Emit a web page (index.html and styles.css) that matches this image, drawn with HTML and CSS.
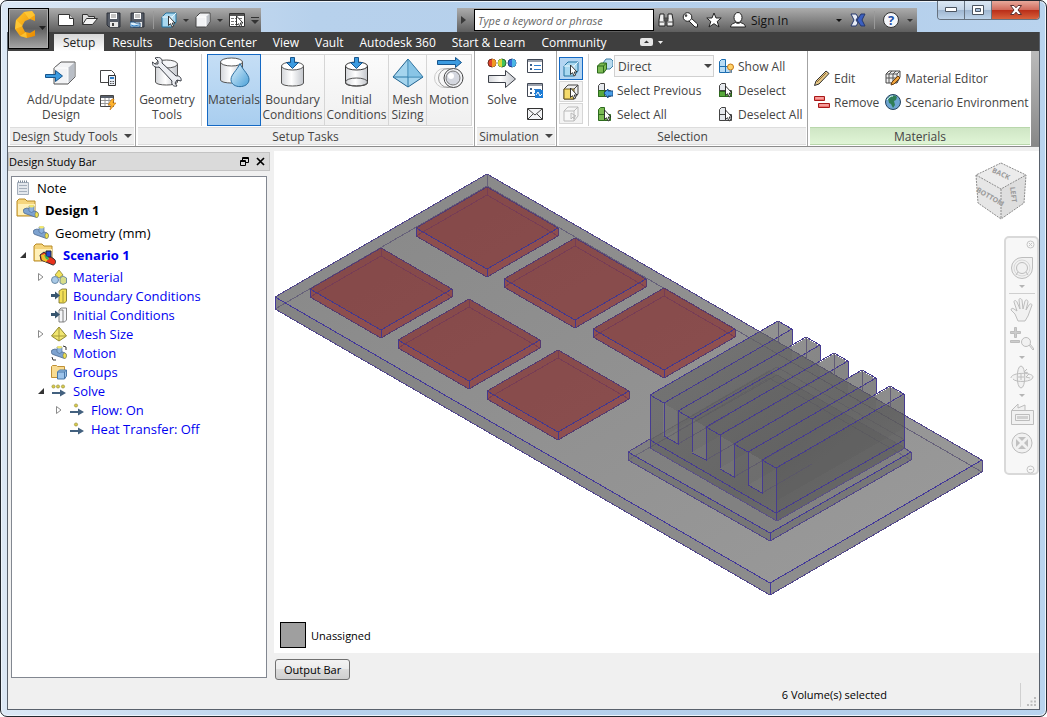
FILE: index.html
```html
<!DOCTYPE html>
<html lang="en">
<head>
  <meta charset="UTF-8" />
  <meta name="viewport" content="width=device-width, initial-scale=1" />
  <title>Design Study</title>
  <link rel="stylesheet" href="styles.css">
</head>
<body>

  <!-- Shared icons -->
  <svg class="sprite" width="0" height="0" aria-hidden="true">
    <defs>
      <linearGradient id="metal"><stop offset="0" stop-color="#d4d6da"/><stop offset=".45" stop-color="#fff"/><stop offset="1" stop-color="#c3c6cc"/></linearGradient>
      <linearGradient id="blue" x2="1" y2="1"><stop offset="0" stop-color="#e4f4fd"/><stop offset="1" stop-color="#4aa0d8"/></linearGradient>
      <linearGradient id="board" x2="1" y2="1"><stop offset="0" stop-color="#878787"/><stop offset="1" stop-color="#9b9b9b"/></linearGradient>
      <linearGradient id="fins" x2="1" y2="1"><stop offset="0" stop-color="#6a6a6a"/><stop offset=".6" stop-color="#5a5a5a"/><stop offset="1" stop-color="#6a6a6a"/></linearGradient>
      <linearGradient id="gold" x2="1" y2="1"><stop offset="0" stop-color="#ffc62b"/><stop offset="1" stop-color="#e98a00"/></linearGradient>

      <symbol id="i-cursor" viewBox="0 0 16 16"><path d="M7.500 4v9.500l2-1.800 1.500 3.300 1.600-.8-1.400-3.200h2.800z" fill="#fff" stroke="#222" stroke-width=".9"/></symbol>
      <symbol id="i-cube" viewBox="0 0 16 16"><path d="M1 5l4-4h10v9l-4 5H1z" fill="#f2f3f5" stroke="#444" stroke-linejoin="round"/><path d="M11 5l3.500-3.500V10L11 14.500z" fill="#bfc3c9"/><path d="M1.500 5H11v9.500" fill="none" stroke="#fff"/></symbol>
      <symbol id="i-cubesel" viewBox="0 0 16 16"><path d="M1 5l4-4h10v9l-4 5H1z" fill="#a9d8f0" stroke="#23739f" stroke-linejoin="round"/><path d="M1 5h10l4-4M11 5v10" fill="none" stroke="#eaf7fd"/><use href="#i-cursor"/></symbol>
      <symbol id="i-cubeyel" viewBox="0 0 16 16"><path d="M1 5l4-4h10v9l-4 5H1z" fill="#eee" stroke="#444"/><path d="M1 5h10v10H1z" fill="#f5db6c" stroke="#6d5a1e"/><path d="M11 5l4-4" stroke="#444"/><use href="#i-cursor"/></symbol>
      <symbol id="i-cubeoff" viewBox="0 0 16 16"><path d="M1 5l4-4h10v9l-4 5H1zM1 5h10l4-4M11 5v10M8 7v6l2-2 1 2 1-1-1-2h2z" fill="#f7f7f7" stroke="#bbb"/></symbol>
      <symbol id="i-down" viewBox="0 0 8 4"><path d="M0 0h8L4 4z" fill="currentColor"/></symbol>
      <symbol id="i-floppy" viewBox="0 0 16 16"><path d="M1 1h13v14H3l-2-2z" fill="#555b66" stroke="#2c3038"/><path d="M4 1h7v6H4z" fill="#fff"/><path d="M5 3h5M5 5h5" stroke="#888"/><path d="M4 10h8v5H4z" fill="#e8e8e8"/><path d="M6 11h2v3H6z" fill="#444"/></symbol>
      <symbol id="i-list" viewBox="0 0 16 16"><path d="M.500 1.500h15v13H.500z" fill="#fff" stroke="#414855"/><path d="M1 2h14v2H1z" fill="#9aa0ab"/><path d="M3 6h2v2H3zM3 10h2v2H3z" fill="#3c5f8a"/><path d="M7 7.500h7M7 11.500h7" stroke="#2c7dd0"/></symbol>
      <symbol id="i-foldr" viewBox="0 0 24 24"><path d="M1 3l2-2h6l2 2h8v15H1z" fill="#f5d57d" stroke="#b88a25"/><path d="M2 6h17v11H2z" fill="#fff0b8"/></symbol>
      <symbol id="i-pipe" viewBox="0 0 16 16"><path d="M1 5l3-1 10 4c2 1 1.500 5.500-.5 5.500L2 9.500C0 9 0 6 1 5z" fill="#7da2cf" stroke="#4a688f" stroke-width=".8"/><path d="M6 2h5v5l-2.500 1.500L6 7z" fill="#8db3de" stroke="#4a688f" stroke-width=".6"/><ellipse cx="8.500" cy="2.300" rx="2.500" ry="1.300" fill="#f3e86b"/><ellipse cx="13.700" cy="10.700" rx="1.700" ry="2.700" fill="#f0e254" stroke="#7a7430" stroke-width=".5"/></symbol>
      <symbol id="i-flow" viewBox="0 0 16 16"><path d="M1 9h8V6.500l6 3.500-6 3.500V11H1z" fill="#43617f"/><circle cx="7" cy="3.500" r="1.600" fill="#d9cc4b" stroke="#8d8431" stroke-width=".6"/></symbol>
      <symbol id="i-closed" viewBox="0 0 8 8"><path d="M1.500 .500L6 4 1.500 7.500z" fill="#fff" stroke="#8a8a8a"/></symbol>
      <symbol id="i-open" viewBox="0 0 8 8"><path d="M7 1v6H1z" fill="#333"/></symbol>
      <symbol id="i-blocks" viewBox="0 0 16 16"><path d="M1.500 3.500l2-2h4v13h-6zM7.500 8.500h6v6h-6zM1.500 8.500h6" stroke-linejoin="round"/></symbol>
    </defs>
  </svg>

  <div class="window">

    <header class="titlebar">
      <button class="app-btn" aria-label="Application menu">
        <svg width="34" height="32" viewBox="0 0 34 32">
          <path d="M11 2l8-1 3 4v6l-5-2-5 2-3 5 3 6 5 1 5-3v6l-8 2-7-2-5-7 1-9z" fill="url(#gold)"/>
          <path d="M11 2l5 7 6-4-3-4zM3 10l7 6-8 3zM7 26l6-4 1 6z" fill="#ffcf3f" opacity=".7"/>
          <path d="M26 16h7l-3.500 4z" fill="#222"/>
        </svg>
      </button>

      <div class="quick">
        <button class="tool" aria-label="New"><svg width="16" height="16"><path d="M.500 2.500h11l4 4v7H.500z" fill="#fff" stroke="#333"/><path d="M11.500 2.500v4h4" fill="#ccc" stroke="#333"/></svg></button>
        <button class="tool" aria-label="Open"><svg width="16" height="16"><path d="M.500 12.500v-10h5l1 2h6v2" fill="#ddd" stroke="#333"/><path d="M.500 12.500l4-6h11l-5 6z" fill="#f5f5f5" stroke="#333"/></svg></button>
        <button class="tool" aria-label="Save"><svg width="16" height="16"><use href="#i-floppy"/></svg></button>
        <button class="tool" aria-label="Save as"><svg width="16" height="16"><use href="#i-floppy"/><path d="M0 10h4l2 1h4v4H0z" fill="#dceefa" stroke="#1d4f80"/><path d="M1 13l3 1 5-1" fill="none" stroke="#2f80c8"/></svg></button>
        <span class="quick-sep"></span>
        <button class="tool" aria-label="Select volume"><svg width="16" height="16"><use href="#i-cubesel"/></svg></button>
        <svg class="caret" width="6" height="3"><use href="#i-down"/></svg>
        <button class="tool" aria-label="View"><svg width="16" height="16"><use href="#i-cube"/></svg></button>
        <svg class="caret" width="6" height="3"><use href="#i-down"/></svg>
        <button class="tool" aria-label="Table"><svg width="16" height="16"><path d="M.500 1.500h15v13H.500z" fill="#fff" stroke="#333"/><path d="M1 3h14" stroke="#555" stroke-width="2"/><path d="M2 6.500h12M2 9.500h12M2 12.500h12" stroke="#777" stroke-dasharray="3 1"/><use href="#i-cursor"/></svg></button>
        <svg class="caret more" width="8" height="7"><path d="M0 .500h8" stroke="#333"/><path d="M0 3h8L4 7z" fill="#333"/></svg>
      </div>

      <div class="info">
        <svg class="info-arrow" width="5" height="8"><path d="M0 0l5 4-5 4z" fill="#3a3a3a"/></svg>
        <input class="search" type="text" placeholder="Type a keyword or phrase" aria-label="Search">
        <button class="tool" aria-label="Find"><svg width="16" height="16"><path d="M2 2h4v4l1 2v6H1V8zM10 2h4l1 6v6H9V8l1-2z" fill="#eee" stroke="#222"/><path d="M6 6h4v3H6zM1 10h5M10 10h5" fill="#555" stroke="#444"/></svg></button>
        <button class="tool" aria-label="Key"><svg width="16" height="16"><path d="M6 8l7 7h2.500v-3L9 6" fill="#fff" stroke="#222"/><circle cx="5.500" cy="5" r="4.300" fill="#fff" stroke="#222"/><circle cx="4" cy="3.600" r="1.300" fill="#444"/></svg></button>
        <button class="tool" aria-label="Favorites"><svg width="16" height="16"><path d="M8 1l2 5h5.200l-4 3.500L13 15l-5-3.300L3 15l1.800-5.500L.800 6H6z" fill="#fff" stroke="#222"/></svg></button>
        <button class="signin"><svg width="16" height="16"><ellipse cx="8" cy="5.500" rx="4" ry="5" fill="#fff" stroke="#222"/><path d="M.500 15c0-3 3-3.500 5-4.500 1 1 4 1 5 0 2 1 5 1.500 5 4.500z" fill="#fff" stroke="#222"/></svg><span>Sign In</span><svg class="caret" width="6" height="3"><use href="#i-down"/></svg></button>
        <button class="tool" aria-label="Exchange"><svg width="16" height="16"><path d="M1 2h5l2 3-2 3 2 3-2 3H1l3-6z" fill="#e8ecf5" stroke="#26386e"/><path d="M15 2h-4L7 8l4 6h4l-3-6z" fill="#3b5fc0" stroke="#26386e"/></svg></button>
        <span class="quick-sep"></span>
        <button class="tool" aria-label="Help"><svg width="16" height="16"><circle cx="8" cy="8" r="7.500" fill="#f4f6fa" stroke="#333"/><text class="help-mark" x="8" y="13" text-anchor="middle">?</text></svg></button>
        <svg class="caret" width="6" height="3"><use href="#i-down"/></svg>
      </div>

      <div class="win-btns">
        <button class="win-btn" aria-label="Minimize"><svg width="12" height="6"><path d="M.500 .500h11v4H.500z" fill="#fff" stroke="#4b5460"/></svg></button>
        <button class="win-btn" aria-label="Restore"><svg width="12" height="10"><path d="M.500 .500h11v9H.500z" fill="#fff" stroke="#4b5460"/><path d="M3.500 3.500h5v3h-5z" fill="#a8c0dc" stroke="#4b5460"/></svg></button>
        <button class="win-btn close" aria-label="Close"><svg width="12" height="10"><path d="M.500 .500h3.500l2 2.300L8 .500h3.500L8 5l3.500 4.500H8L6 7.200 4 9.500H.500L4 5z" fill="#fff" stroke="#5b3030"/></svg></button>
      </div>
    </header>

    <div class="client">
      <nav class="tabs">
        <a class="tab active" href="#">Setup</a>
        <a class="tab" href="#">Results</a>
        <a class="tab" href="#">Decision Center</a>
        <a class="tab" href="#">View</a>
        <a class="tab" href="#">Vault</a>
        <a class="tab" href="#">Autodesk 360</a>
        <a class="tab" href="#">Start &amp; Learn</a>
        <a class="tab" href="#">Community</a>
        <button class="collapse" aria-label="Collapse ribbon"><svg width="24" height="8"><rect width="13" height="8" rx="2" fill="#e6e6e6"/><path d="M4 5h5L6.500 2.500z" fill="#333"/><path d="M18 3h5l-2.500 3z" fill="#eee"/></svg></button>
      </nav>

      <div class="ribbon">
        <section class="panel study">
          <div class="panel-body">
            <button class="big">
              <svg width="32" height="32"><path d="M9 11l7-6h14v15l-7 7H9z" fill="#f2f3f5" stroke="#555" stroke-linejoin="round"/><path d="M23 11l6.500-5.500V20L23 26.500z" fill="#b9bec6"/><path d="M9.500 11H23v15" fill="none" stroke="#fff"/><path d="M.500 17.500h10v-4l7 5.500-7 5.500v-4h-10z" fill="#3c9be0" stroke="#17558c"/></svg>
              <span>Add/Update<br>Design</span>
            </button>
            <div class="stack">
              <button class="mini" aria-label="Properties"><svg width="16" height="16"><path d="M.500 .500h11l3 3v9H.500z" fill="#fff" stroke="#444"/><path d="M8.500 5.500h7v10h-7z" fill="#e9eef5" stroke="#333"/><path d="M10 7h4v2h-4z" fill="#2d7dc8"/><path d="M10 11.500h4M10 13.500h4" stroke="#555" stroke-dasharray="1 .500"/></svg></button>
              <button class="mini" aria-label="Automation"><svg width="16" height="16"><path d="M.500 1.500h13v11H.500z" fill="#fff" stroke="#444"/><path d="M1 2h12v2H1z" fill="#59606c"/><path d="M1 6.500h12M1 9.500h12M5 4v8M9 4v8" stroke="#999"/><path d="M12 5l-4 6h3l-1 5 6-7h-3l1-4z" fill="#ffb52e" stroke="#bf6d08" stroke-width=".6"/></svg></button>
            </div>
          </div>
          <h2 class="panel-title">Design Study Tools <svg width="8" height="4"><use href="#i-down"/></svg></h2>
        </section>

        <section class="panel tasks">
          <div class="panel-body">
            <button class="big geo">
              <svg width="32" height="32"><path d="M4.500 7v18c0 4 22 4 22 0V7z" fill="url(#metal)" stroke="#555"/><ellipse cx="15.500" cy="7" rx="11" ry="4" fill="#f5f6f8" stroke="#555"/><path d="M4 1l3 3v3H4L1.500 5C1 9 4 11 8 10l13 14c-1 3 1 6 5 5l-2-3 2-3 4 1c1-3-2-6-5-5L11 6c1-4-2-7-7-5z" fill="#eceef2" stroke="#3c4048"/></svg>
              <span>Geometry<br>Tools</span>
            </button>
            <span class="sep"></span>
            <div class="tasks-group">
              <button class="big framed on">
                <svg width="32" height="32"><path d="M2.500 5v18c0 4 22 4 22 0V5z" fill="url(#metal)" stroke="#555"/><ellipse cx="13.500" cy="5" rx="11" ry="4" fill="#fff" stroke="#555"/><path d="M22 6.500c-3 7-9 11-9 16 0 9.500 18 9.500 18 0 0-5-6-9-9-16z" fill="url(#blue)" stroke="#2c6fa0"/></svg>
                <span>Materials</span>
              </button>
              <button class="big framed">
                <svg width="32" height="32"><path d="M4.500 9v17c0 4 22 4 22 0V9z" fill="url(#metal)" stroke="#555"/><ellipse cx="15.500" cy="9" rx="11" ry="4" fill="#fff" stroke="#555"/><path d="M13.500 .500h4v5h4l-6 6-6-6h4z" fill="#3c9be0" stroke="#17558c"/></svg>
                <span>Boundary<br>Conditions</span>
              </button>
              <button class="big framed">
                <svg width="32" height="32"><path d="M4.500 9v17c0 4 22 4 22 0V9" fill="url(#metal)" stroke="#333"/><ellipse cx="15.500" cy="25" rx="11" ry="4" fill="none" stroke="#555"/><ellipse cx="15.500" cy="9" rx="11" ry="4" fill="#fff" stroke="#333"/><path d="M13.500 .500h4v5h4l-6 6-6-6h4z" fill="#3c9be0" stroke="#17558c"/></svg>
                <span>Initial<br>Conditions</span>
              </button>
              <button class="big framed">
                <svg width="32" height="32"><path d="M16 2l15 18-15 10L1 20z" fill="#a5d5ee" stroke="#1f618e"/><path d="M16 2v28M1 20h30" stroke="#2d7aa8"/><path d="M16 2l15 18H16z" fill="#6eb5de" opacity=".5"/></svg>
                <span>Mesh<br>Sizing</span>
              </button>
              <button class="big framed">
                <svg width="32" height="32"><path d="M4.500 3.500h18V.500l6 5-6 5V7.500h-18z" fill="#3c9be0" stroke="#17558c"/><circle cx="11" cy="21" r="9.500" fill="none" stroke="#ccc"/><circle cx="15" cy="21" r="9.500" fill="none" stroke="#999"/><circle cx="20.500" cy="21" r="9.500" fill="#f1f2f5" stroke="#444"/><circle cx="20" cy="21" r="7" fill="#d4d7df" stroke="#777"/><circle cx="18" cy="19" r="3" fill="#fff"/></svg>
                <span>Motion</span>
              </button>
            </div>
          </div>
          <h2 class="panel-title">Setup Tasks</h2>
        </section>

        <section class="panel sim">
          <div class="panel-body">
            <button class="big">
              <svg width="32" height="32"><circle cx="6" cy="6" r="4" fill="#e2432c" stroke="#6b2a1c"/><path d="M6 2a4 4 0 010 8z" fill="#ef9b25"/><circle cx="16" cy="6" r="4" fill="#42c25c" stroke="#2f6b35"/><path d="M16 2a4 4 0 000 8z" fill="#d8d837"/><circle cx="26" cy="6" r="4" fill="#3469d8" stroke="#24407d"/><path d="M26 2a4 4 0 010 8z" fill="#4bb6e4"/><path d="M2.500 18.500h17v-5l10 8.500-10 8.500v-5h-17z" fill="url(#metal)" stroke="#3c4048"/></svg>
              <span>Solve</span>
            </button>
            <div class="stack three">
              <button class="mini" aria-label="Job list"><svg width="16" height="16"><use href="#i-list"/></svg></button>
              <button class="mini" aria-label="Monitor"><svg width="16" height="16"><use href="#i-list"/><path d="M8 8h8v8H8z" fill="#1c7cd6"/><path d="M9 13l2-3 2 4 2-2" fill="none" stroke="#fff"/></svg></button>
              <button class="mini" aria-label="Notify"><svg width="16" height="16"><path d="M.500 2.500h15v11H.500z" fill="#f4f5f7" stroke="#333"/><path d="M1 3l7 6 7-6M1 13l5-5M15 13l-5-5" fill="none" stroke="#444"/></svg></button>
            </div>
          </div>
          <h2 class="panel-title">Simulation <svg width="8" height="4"><use href="#i-down"/></svg></h2>
        </section>

        <section class="panel select">
          <div class="panel-body">
            <div class="toggles">
              <button class="toggle on" aria-label="Volumes"><svg width="16" height="16"><use href="#i-cubesel"/></svg></button>
              <button class="toggle" aria-label="Surfaces"><svg width="16" height="16"><use href="#i-cubeyel"/></svg></button>
              <button class="toggle" aria-label="Edges" disabled><svg width="16" height="16"><use href="#i-cubeoff"/></svg></button>
            </div>
            <span class="sep"></span>
            <div class="rows left">
              <div class="row">
                <svg width="16" height="16"><path d="M6 5l3-4h5l2 2v5l-3 3H6z" fill="#b7dbf0" stroke="#3d7da5"/><path d="M.500 8l3-3h6v6l-3 4h-6z" fill="#7cba54" stroke="#2c6a1d"/><path d="M.500 8h6l3-3M6.500 8v7" fill="none" stroke="#2c6a1d"/></svg>
                <span class="combo"><select aria-label="Selection mode"><option>Direct</option></select><svg width="8" height="4"><use href="#i-down"/></svg></span>
              </div>
              <button class="row"><svg width="16" height="16"><use href="#i-blocks" fill="#e6e9ed" stroke="#444"/><path d="M1.500 8.500h6v6h-6z" fill="#59a83c" stroke="#2c6a1d"/><path d="M7 11l4-4v2h5v5h-5v2z" fill="#4a9ee6" stroke="#1a4f86"/></svg>Select Previous</button>
              <button class="row"><svg width="16" height="16"><use href="#i-blocks" fill="#7cba54" stroke="#2c6a1d"/><use href="#i-cursor"/></svg>Select All</button>
            </div>
            <div class="rows">
              <button class="row"><svg width="16" height="16"><use href="#i-blocks" fill="#b9dcf5" stroke="#1c6db0"/><circle cx="12.500" cy="9" r="3" fill="#ffd36b" stroke="#c77716"/><path d="M11.500 12h2v3h-2z" fill="#999"/></svg>Show All</button>
              <button class="row"><svg width="16" height="16"><use href="#i-blocks" fill="#e6e9ed" stroke="#444"/><path d="M1.500 9.500h12v5h-12z" fill="#59a83c" stroke="#2c6a1d"/><use href="#i-cursor"/></svg>Deselect</button>
              <button class="row"><svg width="16" height="16"><use href="#i-blocks" fill="#e6e9ed" stroke="#444"/><use href="#i-cursor"/></svg>Deselect All</button>
            </div>
          </div>
          <h2 class="panel-title">Selection</h2>
        </section>

        <section class="panel mats">
          <div class="panel-body">
            <div class="rows">
              <button class="row"><svg width="16" height="16"><path d="M.500 15.500L2 11 12 1l3 2.500L5 14z" fill="#e5c685" stroke="#333"/><path d="M3 12l9-9" stroke="#8c6c38"/></svg>Edit</button>
              <button class="row"><svg width="16" height="16"><path d="M.500 2.500h10v4H.500zM4.500 9.500h11v4h-11z" fill="#ee7370" stroke="#a81818"/><path d="M1.500 4h8M5.500 11h9" stroke="#ffc9c7"/></svg>Remove</button>
            </div>
            <div class="rows">
              <button class="row"><svg width="16" height="16"><path d="M1 4l3-3h11v6l-3 6H1z" fill="#eee" stroke="#444"/><path d="M1 4h11v9M1 8h11M4 4v9M8 4v9M12 4l3-3M4 4l3-3M8 4l3-3" fill="none" stroke="#555"/><path d="M6 15l1-3 6-6 2 2-6 6z" fill="#f0a43c" stroke="#6b4010"/></svg>Material Editor</button>
              <button class="row"><svg width="16" height="16"><circle cx="8" cy="8" r="7.500" fill="#6ea5d2" stroke="#24435e"/><path d="M3 4c3-3 7-3 9-1l-1 3-2 1 1 4-2 3-2-4-2-1z" fill="#2f7d55"/><path d="M2 6c2-3 4-4 6-4" stroke="#dff" fill="none"/></svg>Scenario Environment</button>
            </div>
          </div>
          <h2 class="panel-title green">Materials</h2>
        </section>
        <div class="ribbon-end"></div>
      </div>

      <main class="work">
        <aside class="side">
          <div class="side-head">
            <span>Design Study Bar</span>
            <button aria-label="Float"><svg width="9" height="9"><path d="M2.500 3V.500h6v5H6M3 1.500h6M.500 3.500h5v5h-5zM1 4.500h5" fill="none" stroke="#000"/></svg></button>
            <button aria-label="Close bar"><svg width="9" height="9"><path d="M1 1l7 7M8 1L1 8" stroke="#000" stroke-width="1.700"/></svg></button>
          </div>
          <ul class="tree">
            <li class="lvl0"><svg class="note" width="14" height="16"><path d="M1.500 2.500h11v12h-11z" fill="#e3e7ec" stroke="#a3adba"/><path d="M3 5.500h8M3 8.500h8M3 11.500h8" stroke="#a5afbc"/><path d="M2 1.500h10" stroke="#7b8796" stroke-dasharray="1 1" stroke-width="2"/></svg>Note</li>
            <li class="lvl0 root"><svg width="24" height="24"><use href="#i-foldr"/><use href="#i-pipe" x="7" y="6" width="16" height="16"/></svg>Design 1</li>
            <li class="lvl1"><svg width="16" height="16"><use href="#i-pipe"/></svg>Geometry (mm)</li>
            <li class="lvl1 root blue"><svg class="exp" width="8" height="8"><use href="#i-open"/></svg><svg width="24" height="24"><use href="#i-foldr"/><path d="M7 12l4-3 10 7c3 2 1 6-1 6L8 17z" fill="#e8311c" stroke="#2f2f2f"/><path d="M8 12l4-1 4 4-3 4-4-2z" fill="#f0c128"/><path d="M13 8h5v6h-5z" fill="#2549ce" stroke="#223"/><path d="M11 12l4 2 1 3-3-1z" fill="#35b457"/></svg>Scenario 1</li>
            <li class="lvl2"><svg class="exp" width="8" height="8"><use href="#i-closed"/></svg><svg width="16" height="16"><path d="M8 1l4 5-4 3-4-3z" fill="#f1e25a" stroke="#8d8431" stroke-width=".8"/><circle cx="4" cy="11" r="3.500" fill="#a9c9e6" stroke="#547796" stroke-width=".8"/><path d="M9 9l3-2 3.500 2v5L12 15.500 9 14z" fill="#d7dd8a" stroke="#547796" stroke-width=".8"/></svg>Material</li>
            <li class="lvl2"><svg width="16" height="16"><path d="M8 3l3-2h4.500v12l-2 2H8z" fill="#f3df57" stroke="#6e671f" stroke-width=".8"/><path d="M12 3v11" stroke="#a59a38"/><path d="M0 6h4V3.500L9 7.500l-5 4V9H0z" fill="#38566f"/></svg>Boundary Conditions</li>
            <li class="lvl2"><svg width="16" height="16"><path d="M8 3l2-2h5.500v12l-2 2H8zM12 3v12M8 3h4" fill="#f4f5f7" stroke="#666" stroke-width=".8"/><path d="M0 6h4V3.500L9 7.500l-5 4V9H0z" fill="#38566f"/></svg>Initial Conditions</li>
            <li class="lvl2"><svg class="exp" width="8" height="8"><use href="#i-closed"/></svg><svg width="16" height="16"><path d="M8 1l7.500 9L8 15 .500 10z" fill="#f1e670" stroke="#8d8431"/><path d="M8 1v14M1 10h14" stroke="#a59a38"/></svg>Mesh Size</li>
            <li class="lvl2"><svg width="16" height="16"><use href="#i-pipe"/><path d="M12 1l3 1v3M1 12l1 3h3" fill="none" stroke="#333"/></svg>Motion</li>
            <li class="lvl2"><svg width="16" height="16"><path d="M.500 2.500l1-1h4l1 1h7v11H.500z" fill="#f9dc92" stroke="#c09035"/><path d="M6.500 8l2-2h7v6l-2 3h-7z" fill="#9cc3ea" stroke="#4b78a8"/><path d="M6.500 8h7v7M13.500 8l2-2" fill="none" stroke="#4b78a8"/></svg>Groups</li>
            <li class="lvl2"><svg class="exp" width="8" height="8"><use href="#i-open"/></svg><svg width="16" height="16"><use href="#i-flow"/><circle cx="2.500" cy="3.500" r="1.600" fill="#d9cc4b" stroke="#8d8431" stroke-width=".6"/><circle cx="12" cy="3.500" r="1.600" fill="#d9cc4b" stroke="#8d8431" stroke-width=".6"/></svg>Solve</li>
            <li class="lvl3"><svg class="exp" width="8" height="8"><use href="#i-closed"/></svg><svg width="16" height="16"><use href="#i-flow"/></svg>Flow: On</li>
            <li class="lvl3"><svg width="16" height="16"><use href="#i-flow"/></svg>Heat Transfer: Off</li>
          </ul>
        </aside>

        <div class="right">
          <div class="view">
            <!-- Board, six chips and the heat sink -->
            <svg class="model" viewBox="274 151 765 502" shape-rendering="crispEdges">
              <defs>
                <g id="chip">
                  <path d="M0 0L71 41v8L0 90-71 49v-8z" fill="#842020" fill-opacity=".6"/>
                  <path d="M-71 41L0 82 71 41v8L0 90-71 49z" fill="#9b5557" fill-opacity=".35"/>
                  <path d="M-71 49L0 8 71 49M0 0v8" fill="none" stroke="#773d55"/>
                  <path d="M0 0L71 41v8L0 90-71 49v-8z" fill="none" stroke="#553a70"/>
                  <path d="M-71 41L0 82 71 41M0 82v8M-71 41v8" fill="none" stroke="#42388f"/>
                </g>
                <g id="fin">
                  <path d="M14 8v33L142-32v-34z" fill="#555" fill-opacity=".12"/>
                  <path d="M0 0l14 8L142-66M0 0L128-74l14 8v16M14 8v33" fill="none" stroke="#463b91"/>
                  <path d="M128-74v22" stroke="#605a75"/>
                </g>
              </defs>

              <path d="M487 174l495 286v12L770 595 275 309v-12z" fill="url(#board)"/>
              <path d="M275 297l495 286v12L275 309zM770 583l212-123v12L770 595z" fill="#777" fill-opacity=".35"/>
              <path d="M275 309l212-123 495 286M487 174v12" fill="none" stroke="#66617a"/>
              <path d="M487 174l495 286v12L770 595 275 309v-12z" fill="none" stroke="#51468a"/>
              <path d="M275 297l495 286 212-123M770 583v12M275 297v12" fill="none" stroke="#43389a"/>

              <use href="#chip" x="487" y="187"/>
              <use href="#chip" x="575" y="238"/>
              <use href="#chip" x="664" y="288"/>
              <use href="#chip" x="381" y="248"/>
              <use href="#chip" x="469" y="299"/>
              <use href="#chip" x="558" y="350"/>

              <path d="M628 452l141-82 142 82v8l-141 81-142-81z" fill="#777" fill-opacity=".65"/>
              <path d="M628 452l142 81 141-81v8l-141 81-142-81z" fill="#666" fill-opacity=".4"/>
              <path d="M628 460l141-82 142 82" fill="none" stroke="#6a6778"/>
              <path d="M628 460v-8l22-13M904 448l7 4v8l-141 81-142-81" fill="none" stroke="#51468a"/>
              <path d="M628 452l142 81 141-81M770 533v8" fill="none" stroke="#43389a"/>

              <path d="M650 395l128-74 14 8v17l14-8 14 8v16l14-8 14 8v16l14-7 14 8v16l14-8 15 8v53l-128 73-127-73z" fill="url(#fins)" fill-opacity=".7"/>
              <path d="M777 468l128-73v53l-128 73z" fill="#444" fill-opacity=".14"/>
              <path d="M663 403v33l14 8v-33zM692 419v34l14 7v-33zM720 436v33l14 8v-33zM748 452v33l14 8v-33z" fill="#999" fill-opacity=".25"/>
              <path d="M650 440l127-73 128 73M649 448l128-73 128 73" fill="none" stroke="#57535f" stroke-opacity=".35"/>
              <path d="M678 444l50-29M706 460l50-29M734 477l50-29M762 493l50-29" fill="none" stroke="#5b5670" stroke-opacity=".7"/>
              <use href="#fin" x="650" y="395"/>
              <use href="#fin" x="678" y="411"/>
              <use href="#fin" x="706" y="427"/>
              <use href="#fin" x="734" y="444"/>
              <use href="#fin" x="762" y="460"/>
              <path d="M664 436l14 8v-33M692 453l14 7v-33M720 469l14 8v-33M748 485l14 8v-33M650 395v53M776 468v53M904 395v53M650 440l126 73 128-73" fill="none" stroke="#463b91"/>
              <path d="M650 448l127 73 128-73" fill="none" stroke="#5a5085"/>
            </svg>

            <div class="view-cube">
              <svg width="54" height="58">
                <path d="M27 1l25 12-25 14L2 13z" fill="#ececec"/>
                <path d="M2 13l25 14v30L4 41z" fill="#e6e6e6"/>
                <path d="M52 13L27 27v30l23-16z" fill="#dedede"/>
                <path d="M27 1l25 12-2 28-23 16L4 41 2 13zM2 13l25 14 25-14M27 27v30" fill="none" stroke="#8a8a8a" stroke-dasharray="2 1"/>
                <text class="cube-text" text-anchor="middle" transform="translate(26 14) rotate(25)">BACK</text>
                <text class="cube-text" text-anchor="middle" transform="translate(15 37) rotate(30)">BOTTOM</text>
                <text class="cube-text" text-anchor="middle" transform="translate(37 33) rotate(82)">LEFT</text>
              </svg>
            </div>

            <div class="nav-bar">
              <button class="nav-corner" aria-label="Close navigation bar"><svg width="9" height="9"><circle cx="4.500" cy="4.500" r="3.500" fill="none" stroke="#c6c6c6"/><path d="M3 3l3 3M6 3L3 6" stroke="#c6c6c6"/></svg></button>
              <button class="nav-btn wheel" aria-label="Wheel"><svg width="24" height="24"><path d="M12 1.500h10.500V12A10.500 10.500 0 1112 1.500z"/><circle cx="12" cy="12" r="8" stroke-opacity=".5"/><circle cx="12" cy="12" r="5.500"/><path d="M8 16l-2 3M16 16l2 3"/></svg></button>
              <svg class="nav-caret" width="6" height="3"><use href="#i-down"/></svg>
              <hr>
              <button class="nav-btn hand" aria-label="Pan"><svg width="24" height="24"><path d="M8 23l-3-7-4-4c0-2 2-2 3-1l3 2-3-9c0-2 2-2 3 0l3 7-1-9c0-2 2-2 3 0l1 9 2-8c1-2 3-1 3 1l-2 8 3-5c1-2 3-1 3 0l-4 11-3 5z"/></svg></button>
              <button class="nav-btn zoom" aria-label="Zoom"><svg width="24" height="24"><path d="M4.500 .500h2v4h4v2h-4v4h-2v-4h-4v-2h4zM.500 13.500h9v2h-9z" fill="#ccc"/><circle cx="16" cy="15" r="4.500"/><path d="M19 18l4 5 1-1-4-5"/></svg></button>
              <svg class="nav-caret" width="6" height="3"><use href="#i-down"/></svg>
              <button class="nav-btn orbit" aria-label="Orbit"><svg width="24" height="24"><path d="M1 13c0-6 22-6 22-1 0 5-17 6-20 2M11 1c5 0 5 22 0 22S6 1 11 1zM11 9v6M8 12h6M19 9l-3 3 4 1M17 4l-3 3 4 1"/></svg></button>
              <svg class="nav-caret" width="6" height="3"><use href="#i-down"/></svg>
              <button class="nav-btn shot" aria-label="Views"><svg width="24" height="24"><path d="M1.500 8.500h22v14h-22zM5.500 12.500h14v6h-14zM2 8l6-6v4l7-3v5"/><path d="M7 14h11v3H7z" fill="#d0d0d0" stroke="none"/></svg></button>
              <button class="nav-btn fit" aria-label="Fit"><svg width="24" height="24"><circle cx="12" cy="12" r="10"/><path d="M8 6h8l-4 4zM8 18h8l-4-4zM6 8v8l4-4zM18 8v8l-4-4z" fill="#c0c0c0" stroke="none"/></svg></button>
              <button class="nav-corner" aria-label="Navigation bar options"><svg width="9" height="9"><circle cx="4.500" cy="4.500" r="3.500" fill="none" stroke="#c6c6c6"/><path d="M3 4.500h3" stroke="#c6c6c6"/></svg></button>
            </div>

            <div class="legend"><span class="swatch"></span>Unassigned</div>
          </div>
          <button class="output">Output Bar</button>
        </div>
      </main>

      <footer class="status">
        <span>6 Volume(s) selected</span>
        <svg class="grip" width="9" height="9"><path d="M7 0h2v2H7zM7 3.500h2v2H7zM7 7h2v2H7zM3.500 3.500h2v2h-2zM3.500 7h2v2h-2zM0 7h2v2H0z" fill="#bdbdbd"/></svg>
      </footer>
    </div>
  </div>
</body>
</html>
```

FILE: styles.css
```css
* {
  box-sizing: border-box;
}

body {
  margin: 0;
  background: #fff;
  color: #000;
  font-family: "Open Sans", "Noto Sans", sans-serif;
  font-size: 12px;
}

button {
  margin: 0;
  padding: 0;
  border: none;
  background: none;
  color: inherit;
  font: inherit;
}

svg {
  display: block;
  flex: none;
}

.sprite {
  position: absolute;
}

/* Window frame */
.window {
  display: flex;
  flex-direction: column;
  min-height: 100vh;
  padding: 0 6px 6px;
  border: 1px solid #23272e;
  border-radius: 7px;
  background: linear-gradient(90deg, #dce8f5, #b7d1ec 30%, #b4cfeb 80%, #b9d3ee);
  box-shadow: inset 0 0 0 1px #eef5fc;
}

.client {
  display: flex;
  flex-direction: column;
  flex: 1;
  border: 1px solid #59616c;
  border-top: none;
  background: #f0f0f0;
}

/* Title bar */
.titlebar {
  position: relative;
  display: flex;
  align-items: flex-start;
  height: 31px;
}

.app-btn {
  position: absolute;
  top: 7px;
  left: 1px;
  width: 41px;
  height: 41px;
  padding: 0 0 6px 4px;
  border: 1px solid #000;
  background: linear-gradient(#8f8f8f, #606060 50%, #a5a5a5);
  box-shadow: inset 0 0 0 1px #aaa;
  z-index: 2;
}

.quick,
.info {
  display: flex;
  align-items: center;
  height: 24px;
  margin-top: 7px;
  background: linear-gradient(#acacac, #5e5e5e);
  color: #333;
}

.quick {
  gap: 8px;
  margin-left: 42px;
  padding: 0 4px 0 9px;
}

.quick-sep {
  width: 1px;
  height: 18px;
  background: #999;
}

.quick .quick-sep {
  margin: 0 -1px;
}

.quick .caret {
  margin: 0 -2px;
}

.info {
  gap: 8px;
  margin-left: auto;
  padding: 0 4px;
}

.search {
  width: 180px;
  height: 22px;
  margin-right: -4px;
  padding: 0 3px;
  border: 1px solid #000;
  background: #fff;
  font: inherit;
}

.search::placeholder {
  color: #666;
  font-style: italic;
  font-size: 11px;
  opacity: 1;
}

.signin {
  display: flex;
  align-items: center;
  gap: 5px;
  width: 112px;
  color: #111;
}

.signin .caret {
  margin-left: auto;
}

.help-mark {
  fill: #1d4fa8;
  font-size: 13px;
  font-weight: 700;
}

.win-btns {
  display: flex;
  height: 19px;
  margin-left: 20px;
  border: 1px solid #66727f;
  border-top: none;
  border-radius: 0 0 4px 4px;
  overflow: hidden;
}

.win-btn {
  display: flex;
  align-items: center;
  justify-content: center;
  width: 27px;
  border-right: 1px solid #66727f;
  background: linear-gradient(#dbe7f3, #c3d4e6 50%, #9fb6d0 50%, #bdd3e9);
}

.win-btn.close {
  width: 47px;
  border-right: none;
  background: linear-gradient(#e8a99b, #d0695a 50%, #b92c17 50%, #d8623c);
}

/* Ribbon tabs */
.tabs {
  display: flex;
  align-items: flex-end;
  height: 19px;
  padding-left: 46px;
  background: #3f3f3f;
}

.tab {
  padding: 0 8px;
  color: #fff;
  line-height: 17px;
  text-decoration: none;
  white-space: nowrap;
}

.tab.active {
  padding: 0 9px;
  background: linear-gradient(#d5d5d5, #fff);
  color: #222;
}

.collapse {
  align-self: center;
  margin-left: 26px;
}

/* Ribbon */
.ribbon {
  display: flex;
  height: 96px;
  border-bottom: 1px solid #8b8b8b;
  background: #fff;
  color: #444;
}

.panel {
  display: flex;
  flex: none;
  flex-direction: column;
  border-right: 1px solid #a3a3a3;
}

.panel-body {
  display: flex;
  flex: 1;
  padding: 3px 2px 1px;
}

.panel-title {
  display: flex;
  align-items: center;
  justify-content: center;
  gap: 6px;
  height: 18px;
  margin: 0 1px 1px 2px;
  border-top: 1px solid #ddd;
  border-bottom: 1px solid #ddd;
  background: #efefef;
  font-size: 12px;
  font-weight: 400;
  white-space: nowrap;
}

.panel-title.green {
  border-color: #b9d7ac;
  background: linear-gradient(#cfe6c5, #e0f5d6);
}

.big {
  display: flex;
  flex-direction: column;
  align-items: center;
  gap: 3px;
  padding-top: 3px;
  line-height: 15px;
  text-align: center;
  white-space: nowrap;
}

.framed {
  padding-top: 2px;
  border: 1px solid #d6d6d6;
  border-left: none;
  background: linear-gradient(#fbfbfb, #f0f0f0);
}

.framed.on {
  border: 1px solid #1469c4;
  background: linear-gradient(#c5def5, #a9ceef);
}

.tasks-group {
  display: grid;
  grid-template-columns: 54px 64px 64px 38px 45px;
}

.sep {
  width: 1px;
  margin-bottom: 1px;
  background: #d0d0d0;
}

.stack {
  display: flex;
  flex-direction: column;
  justify-content: center;
  gap: 8px;
}

.stack.three {
  justify-content: flex-start;
  padding-top: 4px;
}

.study {
  width: 128px;
}

.study .big {
  width: 102px;
}

.study .stack {
  margin-left: -12px;
}

.tasks {
  width: 339px;
}

.geo {
  width: 58px;
}

.tasks .sep {
  margin: 0 5px;
}

.sim {
  width: 82px;
}

.sim .big {
  width: 50px;
}

.select {
  width: 251px;
}

.toggles {
  display: flex;
  flex-direction: column;
  gap: 1px;
  padding-top: 3px;
}

.toggle {
  display: flex;
  align-items: center;
  justify-content: center;
  width: 24px;
  height: 21px;
  border: 1px solid #d6d6d6;
  background: #f4f4f4;
}

.toggle.on {
  height: 23px;
  border: 1px solid #1469c4;
  background: #b4d5f2;
}

.select .sep {
  margin: 0 8px 0 5px;
}

.rows {
  display: flex;
  flex-direction: column;
}

.rows.left {
  width: 121px;
}

.row {
  display: flex;
  align-items: center;
  gap: 4px;
  height: 24px;
  white-space: nowrap;
}

.combo {
  position: relative;
  flex: 1;
  margin-left: -3px;
  margin-right: 4px;
}

.combo select {
  display: block;
  width: 100%;
  height: 22px;
  padding: 0 3px;
  border: 1px solid #d0d0d0;
  border-radius: 0;
  background: #f8f8f8;
  color: inherit;
  font: inherit;
  appearance: none;
}

.combo svg {
  position: absolute;
  top: 9px;
  right: 2px;
  pointer-events: none;
}

.mats {
  flex: 1;
  min-width: 0;
  border-right: none;
}

.mats .panel-body {
  align-items: center;
  gap: 6px;
  padding-left: 6px;
}

.ribbon-end {
  flex: none;
  width: 8px;
  background: linear-gradient(#bbb, #888);
}

/* Work area */
.work {
  display: flex;
  flex: 1;
  gap: 4px;
  padding-top: 4px;
}

.side {
  display: flex;
  flex-direction: column;
  width: 262px;
}

.side-head {
  display: flex;
  align-items: center;
  gap: 7px;
  height: 19px;
  margin-top: 1px;
  padding: 0 4px 0 0;
  border: 1px solid #c3c3c3;
  background: #dadada;
  font-size: 11px;
}

.side-head span {
  flex: 1;
}

.tree {
  flex: 1;
  margin: 5px 3px 3px;
  padding: 0;
  border: 1px solid #828790;
  background: #fff;
  font-size: 13px;
  list-style: none;
}

.tree li {
  display: flex;
  align-items: center;
  gap: 6px;
  height: 19px;
  color: #0000f0;
  white-space: nowrap;
}

.tree .lvl0,
.tree .lvl1 {
  height: 21px;
  color: #000;
}

.tree .root {
  height: 24px;
  gap: 5px;
  font-weight: 700;
}

.tree .blue {
  gap: 6px;
  color: #0000f0;
}

.tree .note {
  margin-right: 1px;
}

.lvl0 {
  padding-left: 4px;
}

.lvl1 {
  padding-left: 21px;
}

.lvl2 {
  padding-left: 39px;
}

.lvl3 {
  padding-left: 57px;
}

.tree .exp {
  margin-left: -14px;
}

.right {
  display: flex;
  flex: 1;
  flex-direction: column;
  align-items: flex-start;
}

.view {
  position: relative;
  flex: 1;
  width: 100%;
  background: #fff;
}

.model {
  width: 100%;
}

.view-cube {
  position: absolute;
  top: 11px;
  right: 11px;
}

.cube-text {
  fill: #999;
  font-size: 7px;
  font-weight: 700;
}

.nav-bar {
  position: absolute;
  top: 85px;
  right: 0;
  display: flex;
  flex-direction: column;
  align-items: center;
  width: 35px;
  height: 239px;
  padding: 2px 0;
  border: 2px solid #d9d9d9;
  border-radius: 5px;
  background: #f7f7f7;
  color: #b5b5b5;
}

.nav-btn {
  margin-bottom: 5px;
}

.nav-btn svg {
  fill: #f1f1f1;
  stroke: #bdbdbd;
}

.nav-corner {
  align-self: flex-end;
  margin-right: 2px;
}

.wheel {
  margin-top: 7px;
}

.nav-bar hr {
  width: 26px;
  margin: 5px 0 4px;
  border: none;
  border-top: 1px solid #cfcfcf;
}

.orbit {
  margin-top: 6px;
}

.shot {
  margin-top: 5px;
}

.fit {
  margin-bottom: 10px;
}

.legend {
  position: absolute;
  left: 6px;
  bottom: 5px;
  display: flex;
  align-items: center;
  gap: 5px;
  font-size: 11px;
}

.swatch {
  width: 26px;
  height: 26px;
  border: 1px solid #000;
  background: #9f9f9f;
}

.output {
  height: 21px;
  margin: 6px 0 1px 1px;
  padding: 0 8px;
  border: 1px solid #707070;
  border-radius: 3px;
  background: linear-gradient(#f3f3f3, #ebebeb 50%, #dcdcdc 50%, #cfcfcf);
  font-size: 11px;
}

.status {
  display: flex;
  align-items: center;
  justify-content: flex-end;
  height: 28px;
  font-size: 11px;
}

.status span {
  padding-right: 133px;
  border-right: 1px solid #d0d0d0;
  line-height: 24px;
}

.grip {
  align-self: flex-end;
  margin: 0 3px 3px 6px;
}
```
